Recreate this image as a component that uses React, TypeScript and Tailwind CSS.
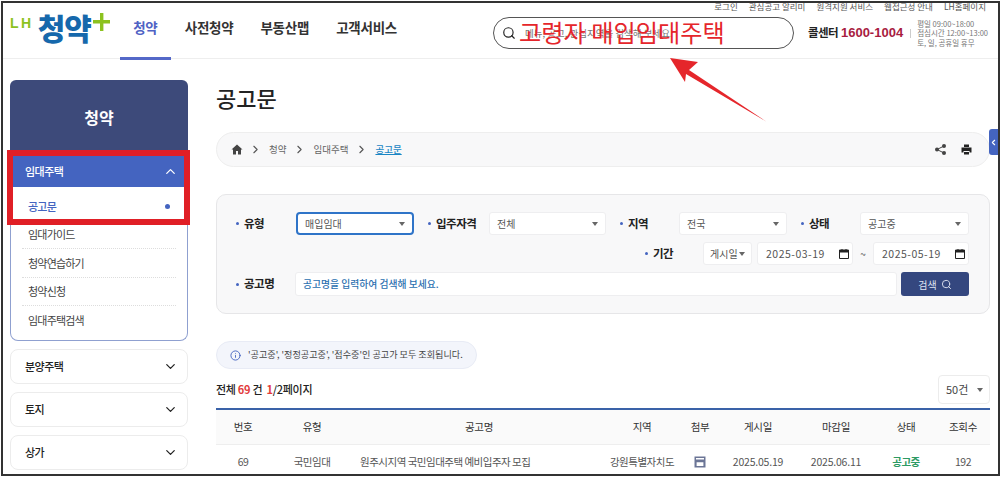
import React from 'react';
import { ChevronDown, ChevronLeft, ChevronRight, ChevronUp, Info, Search } from 'lucide-react';

const FONT = '"Noto Sans CJK KR", "Noto Sans", sans-serif';

const NAV = ['사전청약', '부동산맵', '고객서비스'];
const UTIL = ['로그인', '관심공고 알리미', '원격지원 서비스', '웹접근성 안내', 'LH홈페이지'];
const SUB = ['임대가이드', '청약연습하기', '청약신청', '임대주택검색'];
const ACCORDION = ['분양주택', '토지', '상가'];

const COLUMNS = [
  { label: '번호', value: '69', w: 'w-[54px]' },
  { label: '유형', value: '국민임대', w: 'w-[84px]' },
  { label: '공고명', value: '원주시지역 국민임대주택 예비입주자 모집', w: 'w-[250px]' },
  { label: '지역', value: '강원특별자치도', w: 'w-[76px]' },
  { label: '첨부', value: '', w: 'w-[40px]' },
  { label: '게시일', value: '2025.05.19', w: 'w-[76px]' },
  { label: '마감일', value: '2025.06.11', w: 'w-[80px]' },
  { label: '상태', value: '공고중', w: 'w-[60px]' },
  { label: '조회수', value: '192', w: 'w-[54px]' },
];

const Caret = () => <span className="w-0 h-0 shrink-0 border-x-[3.5px] border-x-transparent border-t-[4px] border-t-[#666]" />;

const Label = ({ text, className }: { text: string; className: string }) => (
  <div className={`flex items-center text-[11.5px] font-bold tracking-[-0.5px] text-[#222] whitespace-nowrap ${className}`}>
    <span className="w-[3px] h-[3px] rounded-full bg-[#4464c0] mr-[5px]" />
    {text}
  </div>
);

const Select = ({ text, className, active }: { text: string; className: string; active?: boolean }) => (
  <div
    className={`flex items-center justify-between h-[23px] px-[7px] bg-white text-[10px] text-[#555] whitespace-nowrap ${
      active ? 'border-2 border-[#2f74c8] rounded-[4px]' : 'border border-[#eeeef0] rounded-[3px]'
    } ${className}`}
  >
    {text}
    <Caret />
  </div>
);

const DateBox = ({ text }: { text: string }) => (
  <div className="flex items-center justify-between w-[96px] h-[23px] pl-[8px] pr-[2px] bg-white rounded-[3px] border border-[#eeeef0] text-[10.5px] tracking-[0.5px] text-[#555]">
    {text}
    <svg width="10" height="10" viewBox="0 0 10 10" className="mr-[1px]">
      <path d="M0.5 1h9v8.5h-9z" fill="none" stroke="#222" />
      <path d="M0.5 1h9v2.5h-9zM2.5 0h1v1h-1zM6.5 0h1v1h-1z" fill="#222" />
    </svg>
  </div>
);

const SaveIcon = () => (
  <svg width="12" height="12" viewBox="0 0 12 12" className="mx-auto">
    <path d="M0.5 0.5h11v11h-11z" fill="#6b7596" />
    <path d="M2 2h8v1.6H2zM2.6 6.2h6.8v3.8H2.6z" fill="#fff" />
  </svg>
);

export default function App() {
  return (
    <div className="relative w-[1003px] h-[477px] overflow-hidden bg-white" style={{ fontFamily: FONT }}>
      <div className="h-[475px] w-[999px] ml-[1px] mt-[1px] border-2 border-[#333] overflow-hidden">
        {/* header */}
        <header className="relative h-[56px] border-b border-[#eeeeee] flex">
          <div className="flex items-start pl-[7px] w-[117px] shrink-0">
            <span className="text-[14px] mt-[13px] tracking-[2.5px] font-bold text-[#8cc21f] leading-none" style={{ fontFamily: '"Liberation Sans", sans-serif' }}>LH</span>
            <span className="text-[30px] font-black text-[#1668ac] leading-[38px] mt-[5px] ml-[4px] tracking-[-1px]">청약</span>
            <svg width="17" height="18" viewBox="0 0 17 18" className="mt-[10px] ml-[2px] shrink-0">
              <path d="M7 0h3.4v7H17v3.4h-6.6V18H7v-7.6H0V7h7z" fill="#8cc21f" />
            </svg>
          </div>
          <nav className="flex items-start w-[277px] shrink-0 pt-[14px] text-[13.5px] leading-[20px] tracking-[-0.25px] font-bold text-[#333] whitespace-nowrap">
            <div className="relative w-[51px] text-center text-[#4f62c4]">
              청약
              <span className="absolute left-0 right-0 top-[40px] h-[3px] bg-[#5468c8]" />
            </div>
            <span className="ml-[14px]">{NAV[0]}</span>
            <span className="ml-[27px]">{NAV[1]}</span>
            <span className="ml-[27px]">{NAV[2]}</span>
          </nav>
          <div className="ml-[96px] mt-[14px] flex items-center shrink-0 w-[301px] h-[32px] rounded-full border border-[#555] pl-[8px] text-[9.5px] text-[#777] whitespace-nowrap">
            <Search size={14} strokeWidth={2} className="text-[#222] mr-[9px]" />
            메뉴, 공고, 관심지역을 검색해 보세요.
          </div>
          <div className="flex items-center mt-[14px] h-[32px] ml-[14px] whitespace-nowrap shrink-0">
            <span className="text-[11.5px] font-bold text-[#222] tracking-[-0.6px]">콜센터</span>
            <span className="text-[13px] font-bold text-[#a81c3f] ml-[3px]" style={{ fontFamily: '"Liberation Sans", sans-serif' }}>1600-1004</span>
            <span className="w-px h-[9px] bg-[#ccc] ml-[7px] mr-[6px]" />
            <div className="text-[7.5px] leading-[9.5px] text-[#777]">
              <div>평일 09:00~18:00</div>
              <div>점심시간 12:00~13:00</div>
              <div>토, 일, 공휴일 휴무</div>
            </div>
          </div>
          <div className="absolute top-[-3px] right-[12px] flex gap-[11px] text-[8.5px] text-[#555] whitespace-nowrap">
            {UTIL.map((u) => (
              <span key={u}>{u}</span>
            ))}
          </div>
        </header>

        <div className="flex">
          {/* sidebar */}
          <aside className="w-[178px] ml-[7px] mt-[21px] shrink-0">
            <div className="h-[75px] bg-[#3d4a7a] rounded-t-[6px] flex justify-center pt-[24px] text-[16px] font-bold text-white leading-[26px]">
              청약
            </div>
            <div className="h-[32px] bg-[#4464c0] flex items-center justify-between pl-[15px] pr-[10px] text-[11px] tracking-[-0.5px] font-medium text-white">
              임대주택
              <ChevronUp size={15} />
            </div>
            <div className="h-[154px] bg-white border border-t-0 border-[#8fa0d0] rounded-b-[8px] px-[11px] pt-[4px] text-[11px] tracking-[-0.8px] text-[#444]">
              <div className="h-[30px] px-[6px] flex items-center justify-between text-[#4464c0] font-medium">
                공고문
                <span className="w-[5px] h-[5px] rounded-full bg-[#4464c0]" />
              </div>
              {SUB.map((s, i) => (
                <div key={s} className={`h-[28.4px] pl-[6px] flex items-center ${i < 3 ? 'border-b border-dotted border-[#ddd]' : ''}`}>
                  {s}
                </div>
              ))}
            </div>
            {ACCORDION.map((a) => (
              <div key={a} className="mt-[8px] h-[35px] bg-white rounded-[8px] border border-[#ececec] flex items-center justify-between pl-[14px] pr-[9px] text-[11px] tracking-[-0.5px] font-medium text-[#222]">
                {a}
                <ChevronDown size={15} className="text-[#222]" />
              </div>
            ))}
          </aside>

          {/* main */}
          <main className="ml-[28px] w-[774px] shrink-0">
            <h1 className="mt-[21px] h-[34px] text-[22px] font-medium leading-[34px] text-[#222]">공고문</h1>
            <div className="relative mt-[18px] h-[35px] w-[774px] rounded-full bg-[#f8f8f9] border border-[#eeeeee] flex items-center pl-[14px] pr-[17px] text-[9.5px] text-[#666] whitespace-nowrap">
              <svg width="12" height="11" viewBox="0 0 12 11"><path d="M6 0.5 0.5 5.5H2V10.5H5V7H7V10.5H10V5.5H11.5Z" fill="#444" /></svg>
              <ChevronRight size={13} className="ml-[6px] mr-[7px] text-[#555]" />
              청약
              <ChevronRight size={13} className="mx-[7px] text-[#555]" />
              임대주택
              <ChevronRight size={13} className="mx-[7px] text-[#555]" />
              <span className="underline text-[#1a86c4] font-medium">공고문</span>
              <svg width="11" height="11" viewBox="0 0 11 11" className="ml-auto mr-[15px]" fill="#444">
                <circle cx="2" cy="5.5" r="2" /><circle cx="9" cy="2" r="2" /><circle cx="9" cy="9" r="2" />
                <path d="M2 5.5 9 2M2 5.5 9 9" stroke="#444" />
              </svg>
              <svg width="11" height="11" viewBox="0 0 11 11" fill="#222">
                <path d="M3 0.5h5v2.5H3zM0.5 3.5h10v5H8.5V7h-6v1.5h-2zM3 8h5v2.5H3z" />
              </svg>
            </div>

            {/* filters */}
            <div className="mt-[27px] h-[120px] w-[774px] rounded-[10px] bg-[#f8f8f9] border border-[#e6e6e8] pl-[19px] pt-[17px]">
              <div className="flex items-center">
                <Label text="유형" className="w-[60px]" />
                <Select text="매입임대" active className="w-[118px]" />
                <Label text="입주자격" className="w-[60px] ml-[14px]" />
                <Select text="전체" className="w-[117px] ml-[1px]" />
                <Label text="지역" className="w-[59px] ml-[14px]" />
                <Select text="전국" className="w-[108px]" />
                <Label text="상태" className="w-[59px] ml-[14px]" />
                <Select text="공고중" className="w-[109px]" />
              </div>
              <div className="flex items-center mt-[7px]">
                <Label text="기간" className="ml-[409px] w-[58px]" />
                <Select text="게시일" className="w-[49px] !px-[6px]" />
                <div className="ml-[5px]"><DateBox text="2025-03-19" /></div>
                <span className="w-[20px] text-center text-[10px] text-[#555]">~</span>
                <DateBox text="2025-05-19" />
              </div>
              <div className="flex items-center mt-[7px]">
                <Label text="공고명" className="w-[59px]" />
                <div className="w-[602px] h-[24px] bg-white rounded-[3px] border border-[#eeeef0] flex items-center pl-[7px] text-[9.8px] font-medium text-[#2a6fb0]">
                  공고명을 입력하여 검색해 보세요.
                </div>
                <div className="ml-[4px] w-[68px] h-[24px] bg-[#34477f] rounded-[3px] flex items-center justify-center gap-[4px] text-[10px] text-[#dfe4f2]">
                  검색 <Search size={11} />
                </div>
              </div>
            </div>

            {/* notice */}
            <div className="mt-[27px] flex items-center h-[28px] w-[261px] rounded-full bg-[#f3f5fb] border border-[#e8ebf5] pl-[13px] text-[9.1px] text-[#444] whitespace-nowrap">
              <Info size={11} className="text-[#4464c0] mr-[7px]" />
              '공고중', '정정공고중', '접수중'인 공고가 모두 조회됩니다.
            </div>

            <div className="flex items-center justify-between h-[29px] mt-[6px]">
              <div className="text-[11px] font-medium tracking-[-0.3px] text-[#222]">
                전체 <span className="text-[#e23b3b] font-bold">69</span> 건 &nbsp;<span className="text-[#e23b3b] font-bold">1</span>/2페이지
              </div>
              <div className="flex items-center justify-between w-[52px] h-[29px] border border-[#ececec] rounded-[4px] pl-[7px] pr-[6px] text-[11px] text-[#444]">
                50건 <Caret />
              </div>
            </div>

            {/* table */}
            <div className="mt-[4px] border-t-2 border-[#3a62a8]">
              <div className="flex items-center h-[35px] bg-[#fafafa] border-b border-[#eeeeee] text-[10.5px] tracking-[-0.3px] text-[#333]">
                {COLUMNS.map((c) => (
                  <div key={c.label} className={`${c.w} text-center`}>{c.label}</div>
                ))}
              </div>
              <div className="flex items-center h-[34px] text-[10.5px] tracking-[-0.5px] text-[#555] whitespace-nowrap">
                {COLUMNS.map((c) => (
                  <div key={c.label} className={`${c.w} ${c.label === '공고명' ? 'pl-[6px] text-left' : 'text-center'} ${c.label === '상태' ? 'text-[#2d9a63] font-bold' : ''} ${c.value.startsWith('2025') ? 'tracking-[-0.2px]' : ''}`}>
                    {c.label === '첨부' ? <SaveIcon /> : c.value}
                  </div>
                ))}
              </div>
            </div>
          </main>
        </div>
      </div>

      {/* side tab */}
      <div className="absolute left-[989px] top-[129px] w-[9px] h-[26px] bg-[#4464c0] rounded-l-[3px] flex items-center justify-center">
        <ChevronLeft size={9} strokeWidth={3} className="text-white" />
      </div>

      {/* annotations drawn over the capture */}
      <div className="absolute left-[7px] top-[150px] w-[183px] h-[75px] border-[6px] border-[#e01f26]" />
      <span className="absolute left-[519px] top-[15px] text-[24.2px] leading-[34px] text-[#e5262b] whitespace-nowrap">고령자 매입임대주택</span>
      <svg className="absolute left-[660px] top-[50px]" width="115" height="80" viewBox="0 0 115 80">
        <path d="M10 8 38 12 29 20 107 72 26 24 25 32Z" fill="#e5262b" />
      </svg>
    </div>
  );
}
